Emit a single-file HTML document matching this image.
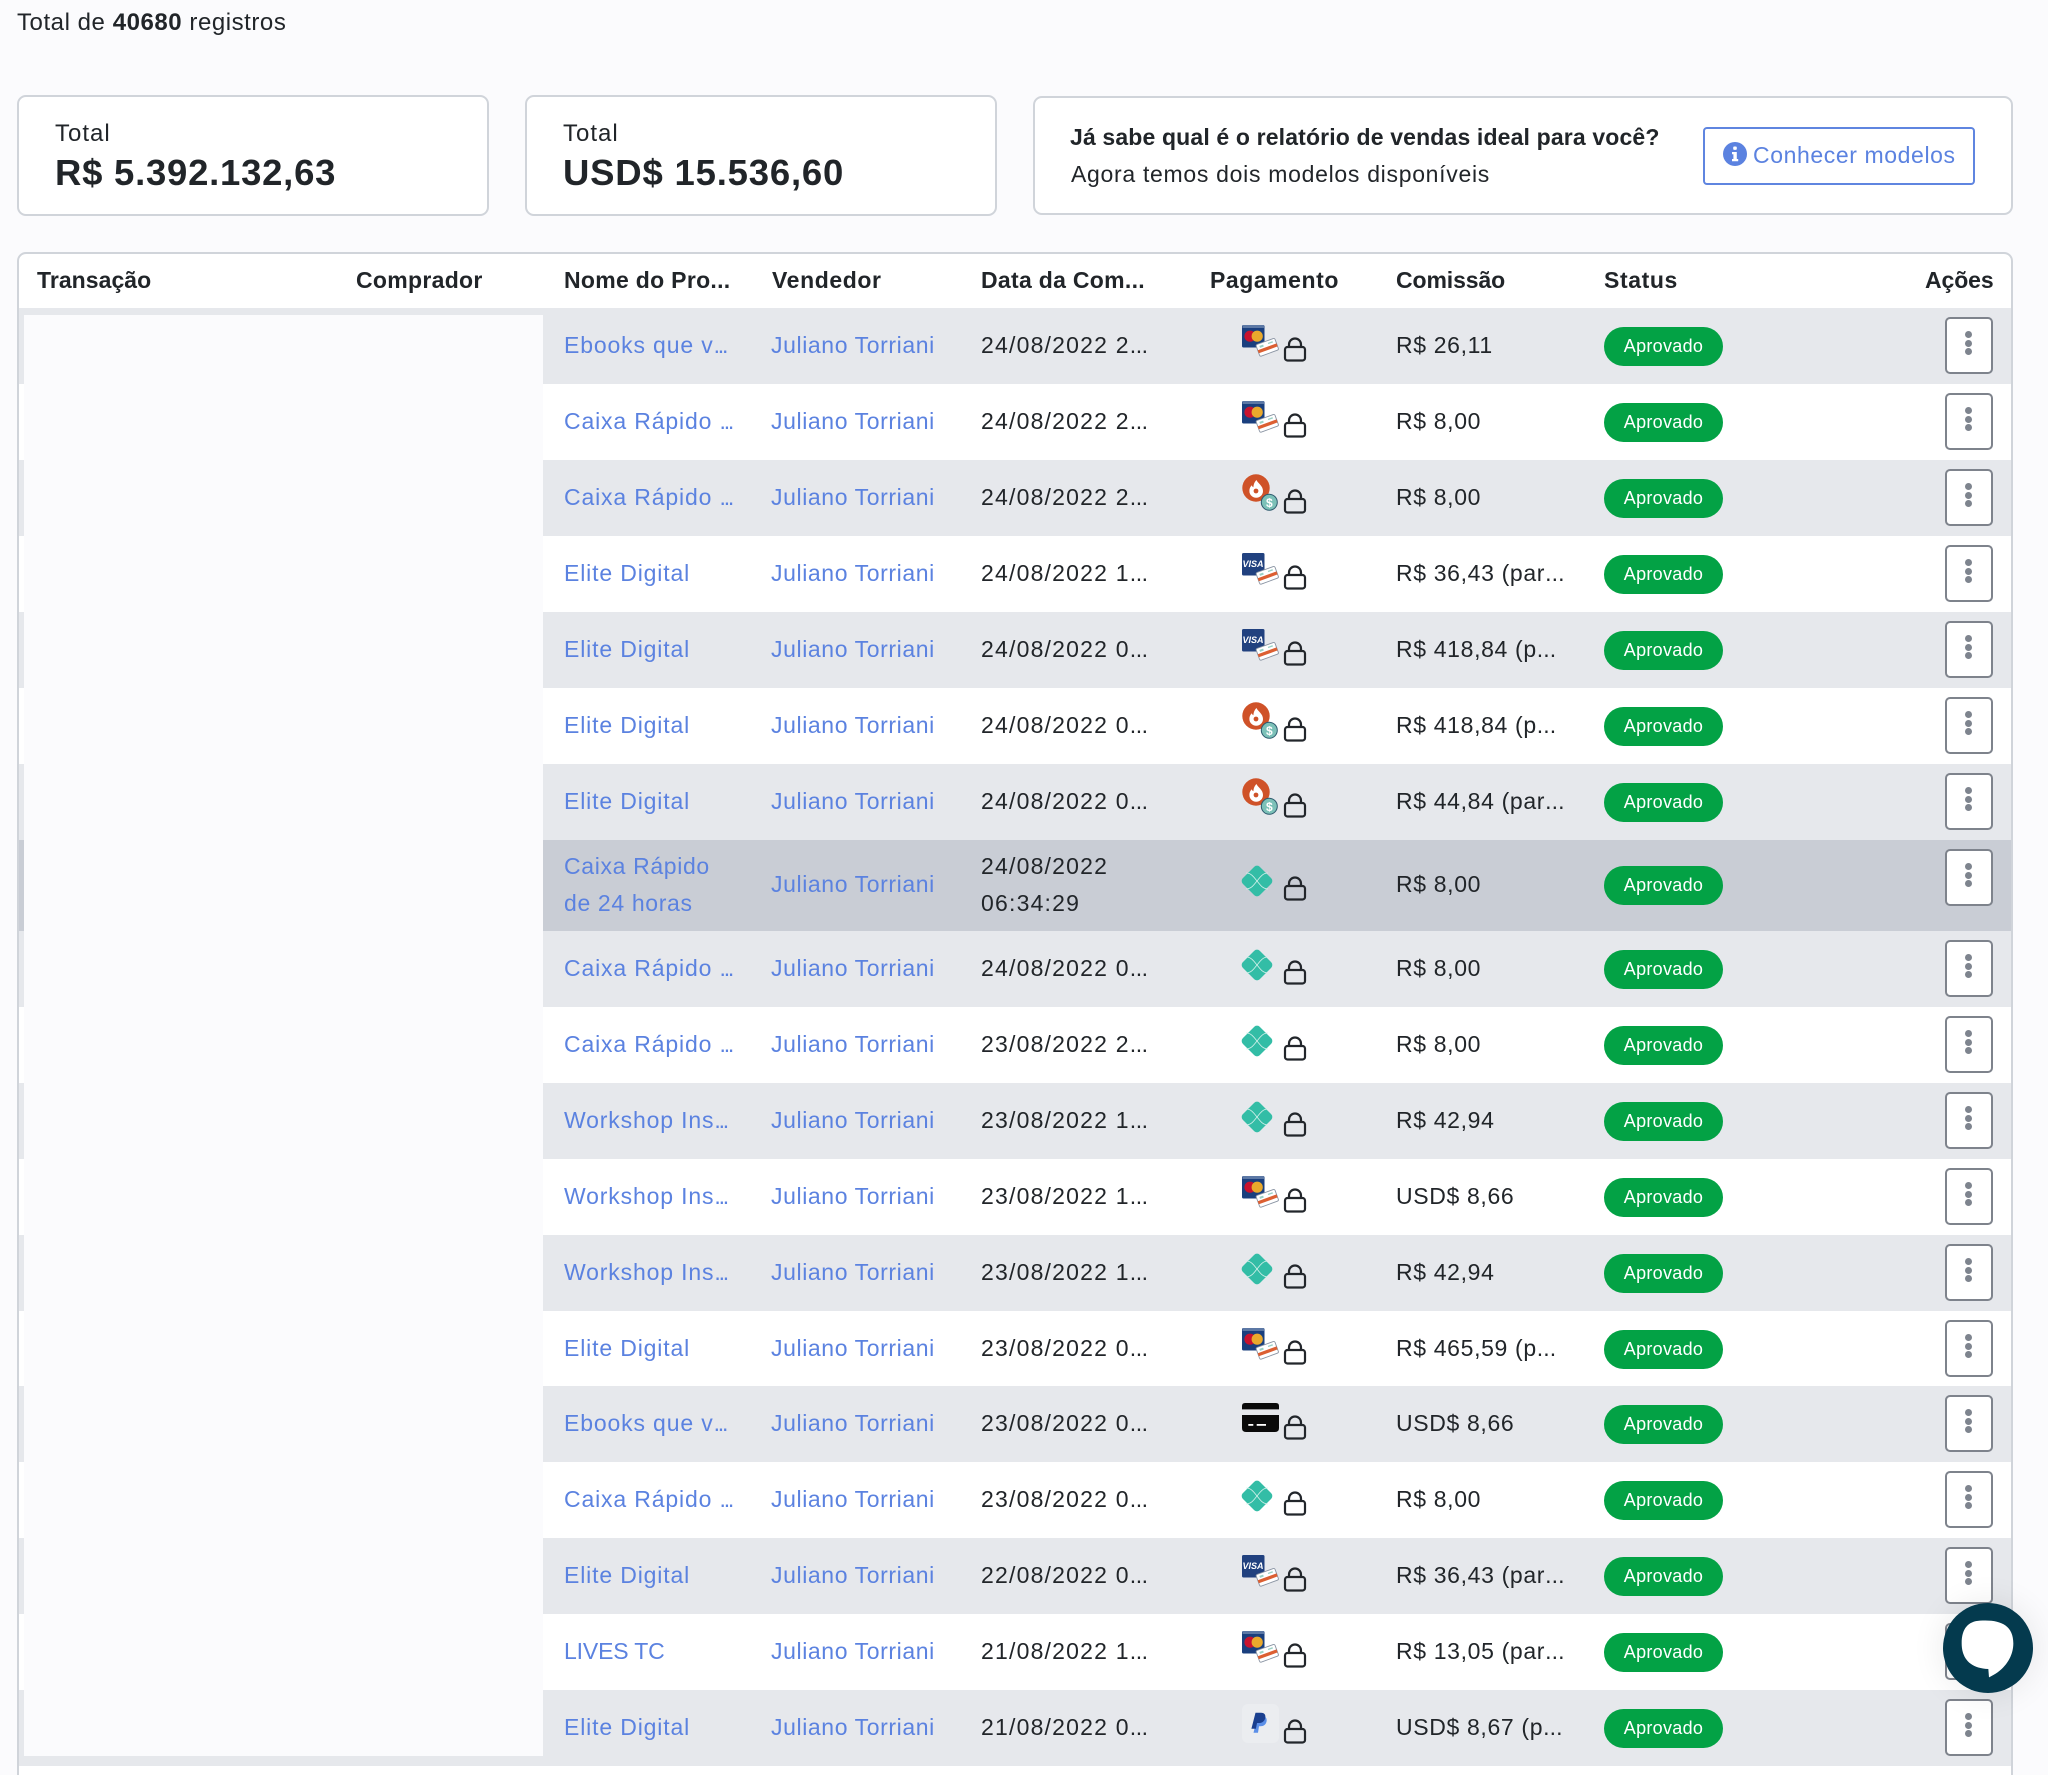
<!DOCTYPE html>
<html lang="pt-BR"><head><meta charset="utf-8"><title>Relatório de vendas</title>
<style>
html,body{margin:0;padding:0;width:2048px;height:1775px;overflow:hidden;background:#fbfbfd}
body{position:relative;font-family:"Liberation Sans",sans-serif;color:#212529;font-size:23px;letter-spacing:.35px;white-space:nowrap}
u{text-decoration:none}
.a{position:absolute}
.card{position:absolute;box-sizing:border-box;background:#fff;border:2px solid #d0d4da;border-radius:9px}
.tbl{position:absolute;left:17px;top:252px;width:1996px;height:1560px;box-sizing:border-box;background:#fff;border:2px solid #d0d4da;border-radius:9px}
.h{position:absolute;top:262px;line-height:36px;font-weight:bold;letter-spacing:.3px}
.r{position:absolute;left:0;width:2011px;height:76px;line-height:76px}
.bgx{position:absolute;left:19px;right:0;top:0;bottom:0}
.g .bgx{background:#e6e8ec}
.t{height:91px}.t .bgx{background:#c9cdd5}
.r .c{position:absolute;top:-1px}
.n{left:564px;color:#5b82e0;letter-spacing:.85px}
.n u{letter-spacing:-2.2px}
.v{left:771px;color:#5b82e0;letter-spacing:.6px}
.d{left:981px;letter-spacing:1.2px}
.d u{letter-spacing:-.4px}
.k{left:1396px;letter-spacing:.65px}
.k u{letter-spacing:.1px}
.ic{position:absolute;left:1242px;top:17px;overflow:visible}
.lk{position:absolute;left:1283px;top:29px}
.t .ic{top:24px}.t .lk{top:36px}
.b{position:absolute;left:1604px;top:19px;width:119px;height:39px;border-radius:20px;background:#03a245;color:#fff;text-align:center;line-height:39px;font-size:18px;letter-spacing:.3px}
.t .b{top:26px}
.m{position:absolute;left:1945px;top:9px;width:48px;height:57px;box-sizing:border-box;background:#fff;border:2px solid #7e838c;border-radius:5px}
.m i{position:absolute;left:18px;width:7px;height:7px;border-radius:50%;background:#7e848e}
.r .two{line-height:36.5px;top:8px}
</style></head><body>
<svg width="0" height="0" style="position:absolute"><defs>
<g id="sc"><g transform="translate(25.3 22.3) rotate(-20)"><rect x="-10" y="-6.2" width="20" height="12.4" rx="1.5" fill="#fff" stroke="#8a94a3" stroke-width=".9"/><rect x="-10" y="-.5" width="20" height="3.2" fill="#dc5f32"/><rect x="-7" y="-4" width="4" height="2" fill="#9bd1c5"/><rect x="2" y="-4" width="5" height="1.4" fill="#9bd1c5"/></g></g>
<symbol id="mc" viewBox="0 0 40 40" overflow="visible"><rect width="22.5" height="22.5" rx="1.5" fill="#1a3f7e"/><rect x=".5" width="21.5" height="3" fill="#5c78a5"/><circle cx="8" cy="11.2" r="5.6" fill="#c8122e"/><circle cx="15.2" cy="11.2" r="5.6" fill="#eaa92c"/><use href="#sc"/></symbol>
<symbol id="vi" viewBox="0 0 40 40" overflow="visible"><rect width="22.5" height="22.5" rx="1.5" fill="#21417f"/><text x="11" y="14" text-anchor="middle" font-family="Liberation Sans" font-weight="bold" font-style="italic" font-size="9" fill="#fff" letter-spacing="0">VISA</text><use href="#sc"/></symbol>
<symbol id="fl" viewBox="0 0 40 40" overflow="visible"><circle cx="14" cy="11" r="13.7" fill="#cf5228"/><path d="M14.5 3c1 3.200 6.500 5.500 6.500 11a6.800 6.800 0 0 1-13.600 0c0-2.700 1-4.200 2.400-5.700 .4 1.300 1 1.800 1.600 2 .1-2.600 1-5.300 3.100-7.300z" fill="#fff"/><circle cx="14" cy="14" r="2.400" fill="#cf5228"/><circle cx="27.300" cy="25.300" r="8" fill="#7cc1b8" stroke="#2d5a6e" stroke-width="1"/><text x="27.300" y="29.800" text-anchor="middle" font-family="Liberation Sans" font-weight="bold" font-size="12" fill="#fff" letter-spacing="0">$</text></symbol>
<symbol id="px" viewBox="0 0 40 40" overflow="visible"><g transform="translate(15 17) rotate(45)"><rect x="-12" y="-12" width="24" height="24" rx="4" fill="#33bda6"/></g><path d="M4 9c5 0 7.500 3.500 11 8c3.500-4.500 6-8 11-8M4 25c5 0 7.500-3.500 11-8c3.500 4.500 6 8 11 8" fill="none" stroke="#d6f1ec" stroke-width=".8"/></symbol>
<symbol id="cd" viewBox="0 0 40 40" overflow="visible"><path d="M0 6.400V3q0-3 3-3h31q3 0 3 3v3.400z" fill="#0a0a0a"/><path d="M0 12h37v13q0 4-4 4H4q-4 0-4-4z" fill="#0a0a0a"/><rect x="6.300" y="21" width="5" height="1.800" fill="#fff"/><rect x="14.700" y="21" width="9.300" height="1.800" fill="#fff"/></symbol>
<symbol id="pp" viewBox="0 0 40 40" overflow="visible"><rect x="0" y="-3" width="37" height="39" rx="6" fill="#ebedf0"/><path d="M15.500 9.500h5.500c3 0 4.200 2.300 3.500 5.300-.8 3-3 4.500-6 4.500h-1.500l-1 6.400h-4.500z" fill="#5b8fe8"/><path d="M13.500 5.700h5.500c3.500 0 5 2.300 4.200 5.500-.8 3.200-3.200 4.800-6.200 4.800h-2l-1.100 5.700h-4.500z" fill="#1a3f8f"/></symbol>
<symbol id="lo" viewBox="0 0 24 26"><rect x="2" y="10" width="20" height="13.500" rx="2.500" fill="none" stroke="#22262b" stroke-width="2.200"/><path d="M6 10V7.500a6 6 0 0 1 12 0V10" fill="none" stroke="#22262b" stroke-width="2.200"/></symbol>
</defs></svg>

<div class="a" style="left:17px;top:5px;line-height:36px;font-size:24px;letter-spacing:.55px">Total de <b>40680</b> registros</div>

<div class="card" style="left:17px;top:95px;width:472px;height:121px"></div>
<div class="a" style="left:55px;top:116px;line-height:36px;font-size:24px;letter-spacing:1px">Total</div>
<div class="a" style="left:55px;top:150px;line-height:46px;font-size:36.500px;font-weight:bold;letter-spacing:.75px">R$ 5.392.132,63</div>
<div class="card" style="left:525px;top:95px;width:472px;height:121px"></div>
<div class="a" style="left:563px;top:116px;line-height:36px;font-size:24px;letter-spacing:1px">Total</div>
<div class="a" style="left:563px;top:150px;line-height:46px;font-size:36.500px;font-weight:bold;letter-spacing:.8px">USD$ 15.536,60</div>

<div class="card" style="left:1033px;top:96px;width:980px;height:119px"></div>
<div class="a" style="left:1070px;top:119px;line-height:36px;font-weight:bold;letter-spacing:.15px">Já sabe qual é o relatório de vendas ideal para você?</div>
<div class="a" style="left:1071px;top:156px;line-height:36px;letter-spacing:.7px">Agora temos dois modelos disponíveis</div>
<div class="a" style="left:1703px;top:127px;width:272px;height:58px;box-sizing:border-box;border:2px solid #5f85e0;border-radius:4px;background:#fff"></div>
<svg class="a" style="left:1723px;top:142px" width="24" height="24" viewBox="0 0 24 24"><circle cx="12" cy="12" r="12" fill="#5b82e0"/><rect x="10.200" y="4.500" width="3.600" height="3.400" rx="1" fill="#fff"/><path d="M9 10h4.800v7h1.400v2.200H9V17h1.400v-4.800H9z" fill="#fff"/></svg>
<div class="a" style="left:1753px;top:137px;line-height:36px;color:#5b82e0;letter-spacing:.6px">Conhecer modelos</div>

<div class="tbl"></div>
<div class="h" style="left:37px;letter-spacing:.05px">Transação</div>
<div class="h" style="left:356px">Comprador</div>
<div class="h" style="left:564px">Nome do Pro...</div>
<div class="h" style="left:772px;letter-spacing:.6px">Vendedor</div>
<div class="h" style="left:981px;letter-spacing:.3px">Data da Com...</div>
<div class="h" style="left:1210px;letter-spacing:.55px">Pagamento</div>
<div class="h" style="left:1396px;letter-spacing:-.1px">Comissão</div>
<div class="h" style="left:1604px;letter-spacing:.6px">Status</div>
<div class="h" style="left:1925px;letter-spacing:-.1px">Ações</div>

<div class="r g" style="top:308px"><div class="bgx"></div><span class="c n">Ebooks que v<u>...</u></span><span class="c v">Juliano Torriani</span><span class="c d">24/08/2022 2<u>...</u></span><svg class="ic" width="40" height="40"><use href="#mc"/></svg><svg class="lk" width="24" height="26"><use href="#lo"/></svg><span class="c k">R$ 26,11</span><div class="b">Aprovado</div><div class="m"><i style="top:12px"></i><i style="top:21px"></i><i style="top:29px"></i></div></div>
<div class="r" style="top:384px"><div class="bgx"></div><span class="c n">Caixa Rápido <u>...</u></span><span class="c v">Juliano Torriani</span><span class="c d">24/08/2022 2<u>...</u></span><svg class="ic" width="40" height="40"><use href="#mc"/></svg><svg class="lk" width="24" height="26"><use href="#lo"/></svg><span class="c k">R$ 8,00</span><div class="b">Aprovado</div><div class="m"><i style="top:12px"></i><i style="top:21px"></i><i style="top:29px"></i></div></div>
<div class="r g" style="top:460px"><div class="bgx"></div><span class="c n">Caixa Rápido <u>...</u></span><span class="c v">Juliano Torriani</span><span class="c d">24/08/2022 2<u>...</u></span><svg class="ic" width="40" height="40"><use href="#fl"/></svg><svg class="lk" width="24" height="26"><use href="#lo"/></svg><span class="c k">R$ 8,00</span><div class="b">Aprovado</div><div class="m"><i style="top:12px"></i><i style="top:21px"></i><i style="top:29px"></i></div></div>
<div class="r" style="top:536px"><div class="bgx"></div><span class="c n">Elite Digital</span><span class="c v">Juliano Torriani</span><span class="c d">24/08/2022 1<u>...</u></span><svg class="ic" width="40" height="40"><use href="#vi"/></svg><svg class="lk" width="24" height="26"><use href="#lo"/></svg><span class="c k">R$ 36,43 (par<u>...</u></span><div class="b">Aprovado</div><div class="m"><i style="top:12px"></i><i style="top:21px"></i><i style="top:29px"></i></div></div>
<div class="r g" style="top:612px"><div class="bgx"></div><span class="c n">Elite Digital</span><span class="c v">Juliano Torriani</span><span class="c d">24/08/2022 0<u>...</u></span><svg class="ic" width="40" height="40"><use href="#vi"/></svg><svg class="lk" width="24" height="26"><use href="#lo"/></svg><span class="c k">R$ 418,84 (p<u>...</u></span><div class="b">Aprovado</div><div class="m"><i style="top:12px"></i><i style="top:21px"></i><i style="top:29px"></i></div></div>
<div class="r" style="top:688px"><div class="bgx"></div><span class="c n">Elite Digital</span><span class="c v">Juliano Torriani</span><span class="c d">24/08/2022 0<u>...</u></span><svg class="ic" width="40" height="40"><use href="#fl"/></svg><svg class="lk" width="24" height="26"><use href="#lo"/></svg><span class="c k">R$ 418,84 (p<u>...</u></span><div class="b">Aprovado</div><div class="m"><i style="top:12px"></i><i style="top:21px"></i><i style="top:29px"></i></div></div>
<div class="r g" style="top:764px"><div class="bgx"></div><span class="c n">Elite Digital</span><span class="c v">Juliano Torriani</span><span class="c d">24/08/2022 0<u>...</u></span><svg class="ic" width="40" height="40"><use href="#fl"/></svg><svg class="lk" width="24" height="26"><use href="#lo"/></svg><span class="c k">R$ 44,84 (par<u>...</u></span><div class="b">Aprovado</div><div class="m"><i style="top:12px"></i><i style="top:21px"></i><i style="top:29px"></i></div></div>
<div class="r t" style="top:840px;line-height:91px"><div class="bgx"></div><span class="c n two" style="letter-spacing:.65px">Caixa Rápido<br>de 24 horas</span><span class="c v">Juliano Torriani</span><span class="c d two">24/08/2022<br>06:34:29</span><svg class="ic" width="40" height="40"><use href="#px"/></svg><svg class="lk" width="24" height="26"><use href="#lo"/></svg><span class="c k">R$ 8,00</span><div class="b">Aprovado</div><div class="m"><i style="top:12px"></i><i style="top:21px"></i><i style="top:29px"></i></div></div>
<div class="r g" style="top:931px"><div class="bgx"></div><span class="c n">Caixa Rápido <u>...</u></span><span class="c v">Juliano Torriani</span><span class="c d">24/08/2022 0<u>...</u></span><svg class="ic" width="40" height="40"><use href="#px"/></svg><svg class="lk" width="24" height="26"><use href="#lo"/></svg><span class="c k">R$ 8,00</span><div class="b">Aprovado</div><div class="m"><i style="top:12px"></i><i style="top:21px"></i><i style="top:29px"></i></div></div>
<div class="r" style="top:1006.900px"><div class="bgx"></div><span class="c n">Caixa Rápido <u>...</u></span><span class="c v">Juliano Torriani</span><span class="c d">23/08/2022 2<u>...</u></span><svg class="ic" width="40" height="40"><use href="#px"/></svg><svg class="lk" width="24" height="26"><use href="#lo"/></svg><span class="c k">R$ 8,00</span><div class="b">Aprovado</div><div class="m"><i style="top:12px"></i><i style="top:21px"></i><i style="top:29px"></i></div></div>
<div class="r g" style="top:1082.800px"><div class="bgx"></div><span class="c n">Workshop Ins<u>...</u></span><span class="c v">Juliano Torriani</span><span class="c d">23/08/2022 1<u>...</u></span><svg class="ic" width="40" height="40"><use href="#px"/></svg><svg class="lk" width="24" height="26"><use href="#lo"/></svg><span class="c k">R$ 42,94</span><div class="b">Aprovado</div><div class="m"><i style="top:12px"></i><i style="top:21px"></i><i style="top:29px"></i></div></div>
<div class="r" style="top:1158.700px"><div class="bgx"></div><span class="c n">Workshop Ins<u>...</u></span><span class="c v">Juliano Torriani</span><span class="c d">23/08/2022 1<u>...</u></span><svg class="ic" width="40" height="40"><use href="#mc"/></svg><svg class="lk" width="24" height="26"><use href="#lo"/></svg><span class="c k">USD$ 8,66</span><div class="b">Aprovado</div><div class="m"><i style="top:12px"></i><i style="top:21px"></i><i style="top:29px"></i></div></div>
<div class="r g" style="top:1234.600px"><div class="bgx"></div><span class="c n">Workshop Ins<u>...</u></span><span class="c v">Juliano Torriani</span><span class="c d">23/08/2022 1<u>...</u></span><svg class="ic" width="40" height="40"><use href="#px"/></svg><svg class="lk" width="24" height="26"><use href="#lo"/></svg><span class="c k">R$ 42,94</span><div class="b">Aprovado</div><div class="m"><i style="top:12px"></i><i style="top:21px"></i><i style="top:29px"></i></div></div>
<div class="r" style="top:1310.500px"><div class="bgx"></div><span class="c n">Elite Digital</span><span class="c v">Juliano Torriani</span><span class="c d">23/08/2022 0<u>...</u></span><svg class="ic" width="40" height="40"><use href="#mc"/></svg><svg class="lk" width="24" height="26"><use href="#lo"/></svg><span class="c k">R$ 465,59 (p<u>...</u></span><div class="b">Aprovado</div><div class="m"><i style="top:12px"></i><i style="top:21px"></i><i style="top:29px"></i></div></div>
<div class="r g" style="top:1386.400px"><div class="bgx"></div><span class="c n">Ebooks que v<u>...</u></span><span class="c v">Juliano Torriani</span><span class="c d">23/08/2022 0<u>...</u></span><svg class="ic" width="40" height="40"><use href="#cd"/></svg><svg class="lk" width="24" height="26"><use href="#lo"/></svg><span class="c k">USD$ 8,66</span><div class="b">Aprovado</div><div class="m"><i style="top:12px"></i><i style="top:21px"></i><i style="top:29px"></i></div></div>
<div class="r" style="top:1462.300px"><div class="bgx"></div><span class="c n">Caixa Rápido <u>...</u></span><span class="c v">Juliano Torriani</span><span class="c d">23/08/2022 0<u>...</u></span><svg class="ic" width="40" height="40"><use href="#px"/></svg><svg class="lk" width="24" height="26"><use href="#lo"/></svg><span class="c k">R$ 8,00</span><div class="b">Aprovado</div><div class="m"><i style="top:12px"></i><i style="top:21px"></i><i style="top:29px"></i></div></div>
<div class="r g" style="top:1538.200px"><div class="bgx"></div><span class="c n">Elite Digital</span><span class="c v">Juliano Torriani</span><span class="c d">22/08/2022 0<u>...</u></span><svg class="ic" width="40" height="40"><use href="#vi"/></svg><svg class="lk" width="24" height="26"><use href="#lo"/></svg><span class="c k">R$ 36,43 (par<u>...</u></span><div class="b">Aprovado</div><div class="m"><i style="top:12px"></i><i style="top:21px"></i><i style="top:29px"></i></div></div>
<div class="r" style="top:1614.100px"><div class="bgx"></div><span class="c n" style="letter-spacing:-.15px">LIVES TC</span><span class="c v">Juliano Torriani</span><span class="c d">21/08/2022 1<u>...</u></span><svg class="ic" width="40" height="40"><use href="#mc"/></svg><svg class="lk" width="24" height="26"><use href="#lo"/></svg><span class="c k">R$ 13,05 (par<u>...</u></span><div class="b">Aprovado</div><div class="m"><i style="top:12px"></i><i style="top:21px"></i><i style="top:29px"></i></div></div>
<div class="r g" style="top:1690px"><div class="bgx"></div><span class="c n">Elite Digital</span><span class="c v">Juliano Torriani</span><span class="c d">21/08/2022 0<u>...</u></span><svg class="ic" width="40" height="40"><use href="#pp"/></svg><svg class="lk" width="24" height="26"><use href="#lo"/></svg><span class="c k">USD$ 8,67 (p<u>...</u></span><div class="b">Aprovado</div><div class="m"><i style="top:12px"></i><i style="top:21px"></i><i style="top:29px"></i></div></div>

<div class="a" style="left:24px;top:315px;width:519px;height:1441px;background:#fbfbfd"></div>

<div class="a" style="left:1943px;top:1603px;width:90px;height:90px;border-radius:50%;background:#043a4e;box-shadow:0 0 34px rgba(0,0,0,.09)"></div>
<svg class="a" style="left:1880px;top:1560px" width="168" height="215" viewBox="0 0 504 645"><path d="M300 182C360 178 400 195 400 250C400 290 375 330 327 352L325 327C270 325 245 295 245 250C245 205 265 184 300 182Z" fill="#fff"/></svg>
</body></html>
